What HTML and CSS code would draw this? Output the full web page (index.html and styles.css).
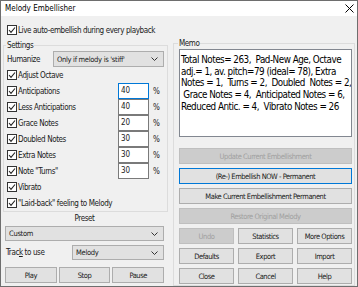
FILE: index.html
```html
<!DOCTYPE html>
<html>
<head>
<meta charset="utf-8">
<title>Melody Embellisher</title>
<link rel="stylesheet" href="styles.css">
</head>
<body>
<div class="window">
  <div class="titlebar">
    <span class="title">Melody Embellisher</span>
    <svg class="close" width="9" height="9" viewBox="0 0 9 9"><path d="M0.5 0.5 L8.5 8.5 M8.5 0.5 L0.5 8.5" stroke="#000" stroke-width="1" fill="none"/></svg>
  </div>
  <div class="client">
    <div class="left">
      <div class="check topcheck"><span class="box"><svg width="8" height="8" viewBox="0 0 8 8"><path d="M1 4 L3 6.3 L7 1.5" stroke="#222" stroke-width="1.1" fill="none"/></svg></span><span>Live auto-embellish during every playback</span></div>
      <fieldset class="group settings">
        <legend>Settings</legend>
        <div class="hrow"><span class="lbl">Humanize</span><div class="combo hum"><span>Only if melody is 'stiff'</span><svg width="7" height="4" viewBox="0 0 7 4"><path d="M0.5 0.5 L3.5 3.5 L6.5 0.5" stroke="#333" stroke-width="1" fill="none"/></svg></div></div>
        <div class="srow"><div class="check"><span class="box"><svg width="8" height="8" viewBox="0 0 8 8"><path d="M1 4 L3 6.3 L7 1.5" stroke="#222" stroke-width="1.1" fill="none"/></svg></span><span>Adjust Octave</span></div></div>
        <div class="srow"><div class="check"><span class="box"><svg width="8" height="8" viewBox="0 0 8 8"><path d="M1 4 L3 6.3 L7 1.5" stroke="#222" stroke-width="1.1" fill="none"/></svg></span><span>Anticipations</span></div><div class="num focus">40</div><span class="pct">%</span></div>
        <div class="srow"><div class="check"><span class="box"><svg width="8" height="8" viewBox="0 0 8 8"><path d="M1 4 L3 6.3 L7 1.5" stroke="#222" stroke-width="1.1" fill="none"/></svg></span><span>Less Anticipations</span></div><div class="num">40</div><span class="pct">%</span></div>
        <div class="srow"><div class="check"><span class="box"><svg width="8" height="8" viewBox="0 0 8 8"><path d="M1 4 L3 6.3 L7 1.5" stroke="#222" stroke-width="1.1" fill="none"/></svg></span><span>Grace Notes</span></div><div class="num">20</div><span class="pct">%</span></div>
        <div class="srow"><div class="check"><span class="box"><svg width="8" height="8" viewBox="0 0 8 8"><path d="M1 4 L3 6.3 L7 1.5" stroke="#222" stroke-width="1.1" fill="none"/></svg></span><span>Doubled Notes</span></div><div class="num">30</div><span class="pct">%</span></div>
        <div class="srow"><div class="check"><span class="box"><svg width="8" height="8" viewBox="0 0 8 8"><path d="M1 4 L3 6.3 L7 1.5" stroke="#222" stroke-width="1.1" fill="none"/></svg></span><span>Extra Notes</span></div><div class="num">30</div><span class="pct">%</span></div>
        <div class="srow"><div class="check"><span class="box"><svg width="8" height="8" viewBox="0 0 8 8"><path d="M1 4 L3 6.3 L7 1.5" stroke="#222" stroke-width="1.1" fill="none"/></svg></span><span>Note "Turns"</span></div><div class="num">30</div><span class="pct">%</span></div>
        <div class="srow"><div class="check"><span class="box"><svg width="8" height="8" viewBox="0 0 8 8"><path d="M1 4 L3 6.3 L7 1.5" stroke="#222" stroke-width="1.1" fill="none"/></svg></span><span>Vibrato</span></div></div>
        <div class="srow"><div class="check"><span class="box"><svg width="8" height="8" viewBox="0 0 8 8"><path d="M1 4 L3 6.3 L7 1.5" stroke="#222" stroke-width="1.1" fill="none"/></svg></span><span>"Laid-back" feeling to Melody</span></div></div>
      </fieldset>
      <div class="bottom">
        <div class="presetlbl">Preset</div>
        <div class="combo preset"><span>Custom</span><svg width="7" height="4" viewBox="0 0 7 4"><path d="M0.5 0.5 L3.5 3.5 L6.5 0.5" stroke="#333" stroke-width="1" fill="none"/></svg></div>
        <div class="trackrow"><span class="lbl">Trac<u>k</u> to use</span><div class="combo track"><span>Melody</span><svg width="7" height="4" viewBox="0 0 7 4"><path d="M0.5 0.5 L3.5 3.5 L6.5 0.5" stroke="#333" stroke-width="1" fill="none"/></svg></div></div>
        <div class="btnrow3 playrow"><div class="btn">Play</div><div class="btn">Stop</div><div class="btn">Pause</div></div>
      </div>
    </div>
    <fieldset class="group memo">
      <legend>Memo</legend>
      <div class="memotext">
        <div class="ln">Total Notes= 263,  Pad-New Age, Octave</div>
        <div class="ln">adj.= 1, av. pitch=79 (ideal= 78), Extra</div>
        <div class="ln">Notes = 1,  Turns = 2,  Doubled  Notes = 2,</div>
        <div class="ln"> Grace Notes = 4,  Anticipated Notes = 6,</div>
        <div class="ln">Reduced Antic. = 4,  Vibrato Notes = 26</div>
      </div>
      <div class="btncol">
        <div class="btn disabled">Update Current Embellishment</div>
        <div class="btn focus">(Re-) Embellish NOW - Permanent</div>
        <div class="btn">Make Current Embellishment Permanent</div>
        <div class="btn disabled">Restore Original Melody</div>
        <div class="btnrow3"><div class="btn disabled">Undo</div><div class="btn">Statistics</div><div class="btn">More Options</div></div>
        <div class="btnrow3"><div class="btn">Defaults</div><div class="btn">Export</div><div class="btn">Import</div></div>
        <div class="btnrow3"><div class="btn">Close</div><div class="btn">Cancel</div><div class="btn">Help</div></div>
      </div>
    </fieldset>
  </div>
</div>
</body>
</html>
```

FILE: styles.css
```css
* { box-sizing: border-box; }
html, body { margin: 0; padding: 0; }
body {
  width: 358px;
  height: 287px;
  overflow: hidden;
  background: #f0f0f0;
  font-family: "DejaVu Sans Condensed", "DejaVu Sans", "Liberation Sans", sans-serif;
  font-stretch: condensed;
  font-size: 8px;
  letter-spacing: -0.4px;
  color: #1a1a1a;
}
.window {
  width: 358px;
  height: 287px;
  border: 1px solid #6e6e6e;
  background: #f0f0f0;
  display: flex;
  flex-direction: column;
}
.titlebar {
  height: 15px;
  flex: none;
  background: #fff;
  display: flex;
  align-items: center;
  justify-content: space-between;
  padding: 0 3px 0 4px;
}
.title { font-size: 8px; letter-spacing: 0; line-height: 15px; color: #000; }
.close { display: block; }
.client {
  flex: 1;
  display: flex;
  gap: 5px;
  padding: 0 2px;
}
.left {
  width: 165px;
  flex: none;
  display: flex;
  flex-direction: column;
}
.check {
  display: flex;
  align-items: center;
  gap: 1px;
  white-space: nowrap;
}
.box {
  width: 10px;
  height: 10px;
  border: 1px solid #333;
  background: #fff;
  display: flex;
  align-items: center;
  justify-content: center;
  flex: none;
}
.box svg { display: block; }
.topcheck {
  margin: 8px 0 0 4px;
  height: 12px;
}
fieldset.group {
  margin: 0;
  border: 1px solid #dcdcdc;
  min-width: 0;
}
fieldset.group legend {
  padding: 0 1px;
  margin-left: -1px;
  line-height: 11px;
  font-size: 8px;
}
.settings {
  margin-top: 4px !important;
  padding: 0 3px 0 3px;
}
.hrow {
  height: 16px;
  display: flex;
  align-items: center;
  justify-content: space-between;
}
.srow {
  height: 16px;
  display: grid;
  grid-template-columns: 1fr 31px 15px;
  align-items: center;
}
.combo {
  height: 16px;
  background: #e1e1e1;
  border: 1px solid #adadad;
  display: flex;
  align-items: center;
  justify-content: space-between;
  padding: 0 5px 0 3px;
  white-space: nowrap;
  font-size: 7.5px;
  letter-spacing: -0.3px;
}
.combo svg { display: block; }
.hum { width: 111px; }
.num {
  height: 16px;
  background: #fff;
  border: 1px solid #7a7a7a;
  padding-left: 2px;
  line-height: 14px;
  letter-spacing: 0;
}
.num.focus { border-color: #0078d7; }
.pct { padding-left: 4px; }
.bottom {
  margin-left: 2px;
  width: 159px;
  display: flex;
  flex-direction: column;
}
.presetlbl {
  margin-top: 1px;
  height: 12px;
  line-height: 12px;
  text-align: center;
}
.preset { margin-top: 1px; height: 15px; }
.trackrow {
  margin-top: 4px;
  height: 15px;
  display: flex;
  align-items: center;
  justify-content: space-between;
  padding-left: 1px;
}
.track { width: 92px; height: 15px; }
.btnrow3 {
  display: grid;
  grid-template-columns: 1fr 1fr 1fr;
  gap: 4px;
  height: 16px;
}
.playrow { margin-top: 7px; gap: 2px; }
.btn {
  height: 16px;
  background: #e1e1e1;
  border: 1px solid #adadad;
  display: flex;
  align-items: center;
  justify-content: center;
  white-space: nowrap;
  font-size: 7.5px;
  letter-spacing: -0.45px;
}
.btn.disabled {
  background: #cccccc;
  border-color: #bfbfbf;
  color: #a0a0a0;
}
.btn.focus { border-color: #0078d7; }
.memo {
  margin-top: 22px !important;
  width: 182px;
  height: 248px;
  padding: 0 2px 1px 5px;
}
.memotext {
  height: 88px;
  background: #fff;
  border: 1px solid #828790;
  padding: 4px 0 0 1px;
  font-size: 9.8px;
  letter-spacing: -0.5px;
  line-height: 11.7px;
  overflow: hidden;
  color: #000;
}
.ln { white-space: pre; }
.btncol {
  margin-top: 11px;
  display: flex;
  flex-direction: column;
  gap: 4px;
}
```
